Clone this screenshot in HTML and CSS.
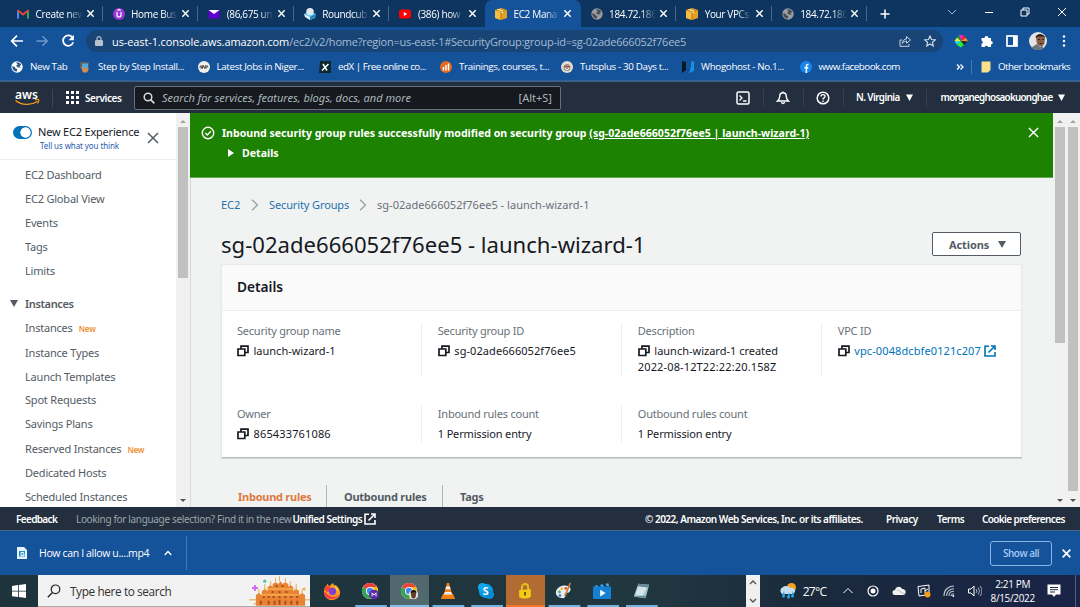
FILE: index.html
```html
<!DOCTYPE html>
<html lang="en">
<head>
<meta charset="utf-8">
<title>EC2 Management Console</title>
<link rel="stylesheet" href="styles.css">
</head>
<body>
<svg class="defs" width="0" height="0">
  <symbol id="x" viewBox="0 0 10 10"><path d="M1.500 1.500l7 7M8.500 1.500l-7 7" stroke="currentColor" fill="none" stroke-width="1.600"/></symbol>
  <symbol id="xthin" viewBox="0 0 12 12"><path d="M1 1l10 10M11 1L1 11" stroke="currentColor" fill="none" stroke-width="1.500"/></symbol>
  <symbol id="cube" viewBox="0 0 12 12"><path d="M0 2l6-2 6 2v8l-6 2-6-2z" fill="#e3a024"/><path d="M0 2l6 1.500V12L0 10z" fill="#f3bd3e"/><path d="M3 1l5 1.500v3l-1.500-.6-1 .4V3L2 1.800z" fill="#fff0b0"/><path d="M6 3.500V12" stroke="#9b6a10" stroke-width=".8"/><path d="M0 2l6 1.500L12 2" fill="none" stroke="#a97610" stroke-width=".6"/></symbol>
  <symbol id="globe" viewBox="0 0 12 12"><circle cx="6" cy="6" r="5.700" fill="currentColor"/><path d="M1.300 5l2.500 1 .8 1.500 1.700.5-.5 2.600C3 10.500 1 8 1.300 5zM5 1.300l3 .3 2.300 2L8.500 5.500l1 1L11 7l-1.500-.3L6.500 6.300 5 4.800l1.700-1z" fill="var(--land)"/></symbol>
  <symbol id="copy" viewBox="0 0 12 12"><path d="M1 4h6.800v6.500H1zM4 4V1.200h7v6.300H8" fill="none" stroke="#16191f" stroke-width="1.700"/></symbol>
  <symbol id="ext" viewBox="0 0 12 12"><path d="M5 1.200H1v9.800h10V7M7 1h4v4M11 1L4.500 7.500" fill="none" stroke="currentColor" stroke-width="1.600"/></symbol>
  <symbol id="chev" viewBox="0 0 8 12"><path d="M1 .8L6.500 6 1 11.200" fill="none" stroke="#9aa5a5" stroke-width="1.400"/></symbol>
  <symbol id="chrome" viewBox="0 0 20 20"><circle cx="10" cy="10" r="9" fill="#fff"/><path d="M10 10V1l7.800 4.500A9 9 0 0 1 10 19z" fill="#f9bc15"/><path d="M2.200 5.500A9 9 0 0 0 10 19l3.500-6L10 10z" fill="#34a353"/><path d="M2.200 5.500A9 9 0 0 1 17.800 5.500H10v4.500z" fill="#e94335"/><circle cx="10" cy="10" r="4.500" fill="#fff"/><circle cx="10" cy="10" r="3.500" fill="#4285f4"/></symbol>
</svg>

<header class="browser">
  <div class="tabs">
    <div class="tab"><svg class="fav" viewBox="0 0 12 12"><path d="M1 10.500V2.500" stroke="#4b8af5" stroke-width="2"/><path d="M11 10.500V2.500" stroke="#35a853" stroke-width="2"/><path d="M.5 2.200L6 6.500l5.500-4.300" fill="none" stroke="#ea4335" stroke-width="2"/></svg><span class="tt">Create new</span><svg class="tx"><use href="#x"/></svg></div>
    <div class="tab"><svg class="fav" viewBox="0 0 12 12"><circle cx="6" cy="6" r="6" fill="#9a35d8"/><path d="M4 4v3a2 2 0 0 0 4 0V4M4.300 2.500L6 1.500l1.700 1" fill="none" stroke="#fff" stroke-width="1.200"/></svg><span class="tt">Home Busi</span><svg class="tx"><use href="#x"/></svg></div>
    <div class="tab"><svg class="fav" viewBox="0 0 12 12"><path d="M.5 2h11v8.500H.5z" fill="#6001d2"/><path d="M.5 2h11L6 6z" fill="#fff"/></svg><span class="tt">(86,675 un</span><svg class="tx"><use href="#x"/></svg></div>
    <div class="tab"><svg class="fav" viewBox="0 0 12 12"><path d="M0 6l6-3 6 3-1 4-5 2-4-3z" fill="#37beff"/><path d="M0 6l6 3v3l-5-3z" fill="#e8eef2"/><circle cx="6" cy="3.800" r="3.800" fill="#dfe7ec"/><path d="M6 9l6-3v2l-5 4H6z" fill="#2b82b3"/></svg><span class="tt">Roundcub</span><svg class="tx"><use href="#x"/></svg></div>
    <div class="tab nosep"><svg class="fav" viewBox="0 0 12 12"><rect y="1.500" width="12" height="9" rx="2.500" fill="#f00"/><path d="M4.800 4l3.500 2-3.500 2z" fill="#fff"/></svg><span class="tt">(386) how</span><svg class="tx"><use href="#x"/></svg></div>
    <div class="tab active"><svg class="fav"><use href="#cube"/></svg><span class="tt">EC2 Mana</span><svg class="tx"><use href="#x"/></svg></div>
    <div class="tab"><svg class="fav grey"><use href="#globe"/></svg><span class="tt">184.72.186</span><svg class="tx"><use href="#x"/></svg></div>
    <div class="tab"><svg class="fav"><use href="#cube"/></svg><span class="tt">Your VPCs</span><svg class="tx"><use href="#x"/></svg></div>
    <div class="tab"><svg class="fav grey"><use href="#globe"/></svg><span class="tt">184.72.186</span><svg class="tx"><use href="#x"/></svg></div>
    <svg class="plus" viewBox="0 0 10 10"><path d="M5 .5v9M.5 5h9" stroke="#fff" stroke-width="1.500"/></svg>
    <div class="wincontrols">
      <svg viewBox="0 0 12 12"><path d="M2 4l4 4 4-4" fill="none" stroke="#9db6d3"/></svg>
      <svg viewBox="0 0 12 12"><path d="M2 6.500h8" stroke="#fff"/></svg>
      <svg viewBox="0 0 12 12"><path d="M2 4h6v6H2zM4 4V2h6v6H8" fill="none" stroke="#fff"/></svg>
      <svg viewBox="0 0 12 12"><path d="M2 2l8 8M10 2l-8 8" fill="none" stroke="#fff"/></svg>
    </div>
  </div>
  <div class="toolbar">
    <svg class="i14" viewBox="0 0 14 14"><path d="M13 7H2M7 1.700L1.700 7 7 12.300" fill="none" stroke="#fff" stroke-width="1.700"/></svg>
    <svg class="i14 fwd" viewBox="0 0 14 14"><path d="M1.500 7h10M7.500 2.300L12.200 7l-4.700 4.700" fill="none" stroke="#6d98c8" stroke-width="1.500"/></svg>
    <svg class="i14 rel" viewBox="0 0 14 14"><path d="M11.800 4A5.200 5.200 0 1 0 12.200 8.300" fill="none" stroke="#fff" stroke-width="1.800"/><path d="M12.900.8v5.400H7.500z" fill="#fff"/></svg>
    <div class="omni">
      <svg class="lock" viewBox="0 0 8 10"><rect y="4" width="8" height="6" rx="1" fill="#b7c2cf"/><path d="M2 4.500V2.700a2 2 0 0 1 4 0v1.800" fill="none" stroke="#b7c2cf" stroke-width="1.200"/></svg>
      <span class="url"><b>us-east-1.console.aws.amazon.com</b>/ec2/v2/home?region=us-east-1#SecurityGroup:group-id=sg-02ade666052f76ee5</span>
      <svg class="i12" viewBox="0 0 12 12"><path d="M3 5H1v6.300h9V9M3.200 8.500C3.500 5.500 5.200 4 7.500 4V1.500L11.500 5 7.500 8.300V6C5.800 6 4.300 6.800 3.200 8.500z" fill="none" stroke="#c5d2e2"/></svg>
      <svg class="i12 star" viewBox="0 0 12 12"><path d="M6 1l1.500 3.500 3.800.3-2.900 2.500.9 3.700L6 9l-3.300 2 .9-3.700L.7 4.800l3.800-.3z" fill="none" stroke="#d5e0ec" stroke-width="1.100"/></svg>
    </div>
    <div class="exts">
      <svg viewBox="0 0 14 14"><path d="M7 7L5 1h4z" fill="#e728d8"/><path d="M7 7l2-6 3 3z" fill="#f22"/><path d="M7 7l5-3 2 3.500z" fill="#f92"/><path d="M7 7l6.500.5L10 11z" fill="#222"/><path d="M7 7l3 4-3 2.500z" fill="#2d3"/><path d="M7 7v6.500L3 11z" fill="#3e3"/><path d="M7 7l-4 4-2.500-4z" fill="#2dd"/><path d="M7 7H.5L3 3.500z" fill="#ee3"/><path d="M7 7L3 3.500 5 1z" fill="#1c9d3c"/></svg>
      <svg viewBox="0 0 14 14"><path d="M1.500 4H4.500a2 2 0 1 1 4 0H11v3a1.800 1.800 0 1 1 0 3.600V13H8a1.700 1.700 0 0 0-3.300 0H1.500V9.800a1.700 1.700 0 0 0 0-3.300z" fill="#fff"/></svg>
      <svg viewBox="0 0 14 14"><rect x="2" y="2" width="10" height="10" fill="none" stroke="#fff" stroke-width="1.700"/><path d="M8 2h4v10H8z" fill="#fff"/></svg>
      <svg class="av" viewBox="0 0 18 18"><circle cx="9" cy="9" r="9" fill="#e3e4e6"/><path d="M7 6c0-5 8-5 9 0l-.6 5.500c-1.500 4-5.500 4-7.500 0z" fill="#8a5f45"/><path d="M6.500 6C6.500 1 15 1 16.300 6L14.500 4.500h-6z" fill="#241b18"/><path d="M2.500 15.500L8 12l3 3 2-1 1.500 1.500c-3 3.500-8.500 3.500-12 0z" fill="#6b747e"/><path d="M9 7.500h2M13 7.500h2M10.500 11.500h3" stroke="#3a241a"/></svg>
      <svg viewBox="0 0 14 14" fill="#fff"><circle cx="7" cy="2.500" r="1.200"/><circle cx="7" cy="7" r="1.200"/><circle cx="7" cy="11.500" r="1.200"/></svg>
    </div>
  </div>
  <div class="bookmarks">
    <div class="bm" style="width:68px"><svg class="white"><use href="#globe"/></svg><span>New Tab</span></div>
    <div class="bm" style="width:118.500px"><svg viewBox="0 0 12 12"><path d="M1 1h9v6H1z" fill="#5a5f5d"/><path d="M3 2.500h6v5H3z" fill="#4fa9d9"/><path d="M2 6l4 1 4 .5-2 4H4z" fill="#d88c45"/></svg><span>Step by Step Install...</span></div>
    <div class="bm" style="width:121.500px"><svg viewBox="0 0 12 12"><circle cx="6" cy="6" r="6" fill="#f2f0ea"/><path d="M1.500 6.500l1.500-2v3l1.500-3v3l1-3 1 3 1-3 .5 3 1-3 1 2" fill="none" stroke="#555"/></svg><span>Latest Jobs in Niger...</span></div>
    <div class="bm tight" style="width:121px"><svg viewBox="0 0 12 12"><path d="M1 0h11v12H0z" fill="#0c2932"/><path d="M4 3l4 6.500M9.500 3L3 9.500" stroke="#fff" stroke-width="1.500"/></svg><span>edX | Free online co...</span></div>
    <div class="bm" style="width:121px"><svg viewBox="0 0 12 12"><circle cx="6" cy="6" r="6" fill="#e76a20"/><path d="M3.500 6v3.500M6 4v5.500M8.500 2.500v7" stroke="#fff" stroke-width="1.500"/></svg><span>Trainings, courses, t...</span></div>
    <div class="bm" style="width:121px"><svg viewBox="0 0 12 12"><circle cx="6" cy="6" r="6" fill="#e2ddd1"/><circle cx="6" cy="6.500" r="3.500" fill="#9b938d"/><path d="M3 5.500h6" stroke="#c74732"/><path d="M4 7l2 2 2-2" stroke="#fff" fill="none"/></svg><span>Tutsplus - 30 Days t...</span></div>
    <div class="bm" style="width:117px"><svg viewBox="0 0 12 12"><path d="M0 0l4 1v8l-4 3z" fill="#07182a"/><path d="M12 0v10l-5 2V8l2-1V1z" fill="#1490e5"/><path d="M4 7l4 1v3z" fill="#084b86"/></svg><span>Whogohost - No.1...</span></div>
    <div class="bm fb tight"><svg viewBox="0 0 12 12"><circle cx="6" cy="6" r="6" fill="#1787ee"/><path d="M6.400 12V5.200C6.400 3.700 7 3.400 8.500 3.500M4.500 6.800h3.800" fill="none" stroke="#fff" stroke-width="1.500"/></svg><span>www.facebook.com</span></div>
    <svg class="more" viewBox="0 0 8 8"><path d="M1 1.500L3.500 4 1 6.500M4.500 1.500L7 4 4.500 6.500" fill="none" stroke="#fff" stroke-width="1.300"/></svg>
    <i></i>
    <svg class="folder" viewBox="0 0 10 12"><path d="M.5.500h9V9L7 11.500H.5z" fill="#fbe08a"/></svg>
    <span class="other">Other bookmarks</span>
  </div>
</header>

<nav class="aws">
  <svg class="smile" viewBox="0 0 26 16"><text class="logo" x="0" y="8.500" textLength="23">aws</text><path d="M.5 10.500c6.500 5 15.500 5 22 1" fill="none" stroke="#f79a1e" stroke-width="1.400"/><path d="M20 9.800c3-.6 4.300-.4 3.800 1-.3 1-.8 2-1.300 2.700" fill="none" stroke="#f79a1e" stroke-width="1.200"/></svg>
  <i class="vs"></i>
  <svg class="grid" viewBox="0 0 13 13" fill="#fff"><path d="M0 0h3v3H0zM5 0h3v3H5zM10 0h3v3h-3zM0 5h3v3H0zM5 5h3v3H5zM10 5h3v3h-3zM0 10h3v3H0zM5 10h3v3H5zM10 10h3v3h-3z"/></svg>
  <b class="services">Services</b>
  <div class="search"><svg viewBox="0 0 12 12"><circle cx="5" cy="5" r="3.800" fill="none" stroke="#d5dbdb" stroke-width="1.500"/><path d="M7.700 7.700l3.600 3.600" stroke="#d5dbdb" stroke-width="1.700"/></svg><em>Search for services, features, blogs, docs, and more</em><span>[Alt+S]</span></div>
  <div class="cell c1"><svg viewBox="0 0 14 14"><rect x="1" y="1" width="12" height="12" rx="1.500" fill="none" stroke="#fff" stroke-width="1.500"/><path d="M3.500 4.500L6 7 3.500 9.500M7 10h3.500" fill="none" stroke="#fff" stroke-width="1.300"/></svg></div>
  <div class="cell"><svg viewBox="0 0 14 14"><path d="M1.500 10c2-1.500 2-3 2.300-5a3.200 3.200 0 0 1 6.400 0c.3 2 .3 3.500 2.300 5zM5.500 11c.2 2 2.800 2 3 0M7 .5V2" fill="none" stroke="#fff" stroke-width="1.400"/></svg></div>
  <div class="cell"><svg viewBox="0 0 14 14"><circle cx="7" cy="7" r="5.800" fill="none" stroke="#fff" stroke-width="1.500"/><path d="M5 5.500C5 3 9 3 9 5.400 9 7 7 6.800 7 8.500M7 9.600V11" fill="none" stroke="#fff" stroke-width="1.400"/></svg></div>
  <div class="cell region"><b>N. Virginia</b><svg class="tri" viewBox="0 0 6 6"><path d="M0 .5h6l-3 5.500z" fill="#fff"/></svg></div>
  <div class="user"><b>morganeghosaokuonghae</b><svg class="tri" viewBox="0 0 6 6"><path d="M0 .5h6l-3 5.500z" fill="#fff"/></svg></div>
</nav>

<main class="page">
  <aside class="side">
    <div class="sidehead">
      <span class="toggle"></span>
      <div class="exp"><div>New EC2 Experience</div><a>Tell us what you think</a></div>
      <svg class="sx"><use href="#xthin"/></svg>
    </div>
    <ul>
      <li>EC2 Dashboard</li><li>EC2 Global View</li><li>Events</li><li>Tags</li><li>Limits</li>
      <li class="group"><svg viewBox="0 0 8 7"><path d="M0 0h8L4 7z" fill="#545b64"/></svg><b>Instances</b></li>
      <li class="n">Instances<b>New</b></li><li>Instance Types</li><li>Launch Templates</li><li>Spot Requests</li><li>Savings Plans</li>
      <li class="n">Reserved Instances<b>New</b></li><li>Dedicated Hosts</li><li>Scheduled Instances</li>
    </ul>
  </aside>
  <div class="sb sb1"><svg viewBox="0 0 6 3"><path d="M0 3l3-3 3 3z" fill="#a3a3a3"/></svg><i></i><svg class="dn" viewBox="0 0 6 3"><path d="M0 0l3 3 3-3z" fill="#505050"/></svg></div>
  <section class="content">
    <div class="flash">
      <svg class="ok" viewBox="0 0 14 14"><circle cx="7" cy="7" r="5.700" fill="none" stroke="#fff" stroke-width="1.400"/><path d="M4.300 7l2 2 3.500-3.700" fill="none" stroke="#fff" stroke-width="1.400"/></svg>
      <div class="msg"><b>Inbound security group rules successfully modified on security group <u>(sg-02ade666052f76ee5 | launch-wizard-1)</u></b>
        <div class="det"><svg viewBox="0 0 6 8"><path d="M0 0l6 4-6 4z" fill="#fff"/></svg><b>Details</b></div></div>
      <svg class="fx"><use href="#xthin"/></svg>
    </div>
    <div class="crumbs"><a class="ec2">EC2</a><svg><use href="#chev"/></svg><a class="sgs">Security Groups</a><svg><use href="#chev"/></svg><span>sg-02ade666052f76ee5 - launch-wizard-1</span></div>
    <div class="titlerow"><h1>sg-02ade666052f76ee5 - launch-wizard-1</h1><div class="btn">Actions<svg viewBox="0 0 8 7"><path d="M0 0h8L4 7z" fill="#545b64"/></svg></div></div>
    <div class="card">
      <h2>Details</h2>
      <div class="cols r1">
        <div><label>Security group name</label><p><svg><use href="#copy"/></svg>launch-wizard-1</p></div>
        <div><label>Security group ID</label><p class="sgid"><svg><use href="#copy"/></svg>sg-02ade666052f76ee5</p></div>
        <div><label>Description</label><p><svg><use href="#copy"/></svg>launch-wizard-1 created<br><span class="date">2022-08-12T22:22:20.158Z</span></p></div>
        <div><label>VPC ID</label><p class="vpc"><svg><use href="#copy"/></svg><a>vpc-0048dcbfe0121c207</a><svg class="e"><use href="#ext"/></svg></p></div>
      </div>
      <div class="cols r2">
        <div><label>Owner</label><p class="own"><svg><use href="#copy"/></svg>865433761086</p></div>
        <div><label>Inbound rules count</label><p class="perm">1 Permission entry</p></div>
        <div><label>Outbound rules count</label><p class="perm">1 Permission entry</p></div>
      </div>
    </div>
    <div class="subtabs"><b class="on">Inbound rules</b><b>Outbound rules</b><b>Tags</b></div>
  </section>
  <div class="sb sb2"><svg viewBox="0 0 6 3"><path d="M0 3l3-3 3 3z" fill="#a3a3a3"/></svg><i></i><svg class="dn" viewBox="0 0 6 3"><path d="M0 0l3 3 3-3z" fill="#505050"/></svg></div>
  <div class="sb sb3"><svg viewBox="0 0 6 3"><path d="M0 3l3-3 3 3z" fill="#a3a3a3"/></svg><i></i><svg class="dn" viewBox="0 0 6 3"><path d="M0 0l3 3 3-3z" fill="#505050"/></svg></div>
</main>

<footer class="foot">
  <b class="fb1">Feedback</b><span class="lang">Looking for language selection? Find it in the new</span><b class="uni">Unified Settings</b><svg><use href="#ext"/></svg>
  <b class="copyr">© 2022, Amazon Web Services, Inc. or its affiliates.</b><b class="priv">Privacy</b><b class="terms">Terms</b><b class="cookie">Cookie preferences</b>
</footer>

<div class="dl">
  <svg class="file" viewBox="0 0 10 12"><path d="M0 0h7l3 3v9H0z" fill="#e8f3fa"/><path d="M2 4h6v5.500H2z" fill="#1d94cf"/><path d="M7 5.500H4v3h3V7H5.500" stroke="#fff" fill="none" stroke-width=".9"/></svg>
  <span>How can I allow u....mp4</span>
  <svg class="up" viewBox="0 0 8 6"><path d="M.7 5L4 1.500 7.300 5" fill="none" stroke="#fff" stroke-width="1.300"/></svg>
  <i></i>
  <div class="showall">Show all</div>
  <svg class="dx"><use href="#x"/></svg>
</div>

<div class="task">
  <div class="start"><svg viewBox="0 0 14 14" fill="#fff"><path d="M0 2l6-.9v5.600H0zM6.800 1L14 0v6.700H6.800zM0 7.500h6v5.600L0 12.200zM6.800 7.500H14V14l-7.200-1z"/></svg></div>
  <div class="tsearch"><svg class="mag" viewBox="0 0 14 14"><circle cx="8.500" cy="5.300" r="4.300" fill="none" stroke="#222" stroke-width="1.200"/><path d="M5.500 8.500L.8 13.200" stroke="#222" stroke-width="1.300"/></svg><span>Type here to search</span>
    <svg class="palace" viewBox="0 0 62 30"><path d="M0 24h62M5 28h52" stroke="#e8a23c"/><path d="M7 30V19l3-2 3 2v-4l3-2 3 2v-4l3-2 2 2V8l3-2 3 2 1-2 1-1 1 1 1 2 3-2 3 2v3l2-2 3 2v4l3-2 3 2v4l3-2 3 2v11z" fill="#ea8433"/><path d="M16 13V8M22 9V5M27 6V2M31 5V0M37 6V2M42 9V5M48 13V8M10 17v-4M54 17v-4" stroke="#e4ad48"/><path d="M12 19h38M17 13h31" stroke="#f9c265"/><path d="M15 22v-2M20 22v-2M25 22v-2M31 22v-2M37 22v-2M43 22v-2M49 22v-2M24 17v-2M31 17v-2M38 17v-2M20 29v-4M26 29v-4M31 29v-5M37 29v-4M43 29v-4M12 29v-4M49 29v-4M28 11V9M34 11V9" stroke="#a64b23" stroke-width="2"/><path d="M3 12h6M6 9v6" stroke="#ce6bea" stroke-width="2"/><circle cx="16" cy="5" r="1.600" fill="#4bc497"/><circle cx="56" cy="13" r="1.600" fill="#f1b33c"/></svg>
  </div>
  <div class="app ff"><svg viewBox="0 0 20 20"><path d="M2 6l2-2 1-2 2 3c1-2 3-3 4-4l2 4 1-2c3 3 5 5 5 9 0 5-4 8-9 8S1 16 1 11z" fill="#ff9a1f"/><path d="M2 6c0 3 1 5 3 5l3-1 2-3-3-2-3-1z" fill="#ff4436"/><path d="M1 11c0 5 4 8 9 8 4 0 7-2 8-5-3 3-6 3-9 2-4-1-5-5-8-5z" fill="#f83a50"/><circle cx="10.500" cy="10.500" r="4" fill="#7e40d9"/><path d="M12 3c3 2 5 4 5 8l-3-4z" fill="#ffd83d"/></svg></div>
  <div class="app run"><svg viewBox="0 0 20 20"><use href="#chrome"/><circle cx="14.500" cy="14" r="5.500" fill="#5b2aa6"/><path d="M12.300 16v-4l2.200 2.500 2.200-2.500v4" fill="none" stroke="#fff"/></svg></div>
  <div class="app cur"><svg viewBox="0 0 20 20"><use href="#chrome"/><circle cx="15" cy="14" r="5.300" fill="#e2ded9"/><path d="M12 12c1-4 6-4 6 0l-.5 4c-1 3-4 3-5 0z" fill="#60402d"/><path d="M11.800 12c0-4 6.500-4 6.500 0l-2-1z" fill="#17110e"/></svg></div>
  <div class="app run"><svg viewBox="0 0 20 20"><path d="M3 16l1.500-3h11l1.500 3 1 3H2z" fill="#ee7b14"/><path d="M8.800 1h2.400L15 16H5z" fill="#f28420"/><path d="M7.900 5h4.200l.8 3H7.100zM6.300 11h7.400l.8 3h-9z" fill="#eee"/></svg></div>
  <div class="app run"><svg viewBox="0 0 20 20"><circle cx="10" cy="10" r="8" fill="#0a9ae5"/><circle cx="6" cy="6" r="5" fill="#10a5ee"/><circle cx="14" cy="14" r="5" fill="#0789d6"/><text class="skype" x="6.500" y="14.500">S</text></svg></div>
  <div class="app orange"><svg viewBox="0 0 20 20"><path d="M6.500 10V6c0-5 7-5 7 0v4" fill="none" stroke="#e3c21c" stroke-width="2.200"/><path d="M3.500 9l13-1v8c-3 3-9 3-13 1z" fill="#f2cb16"/><path d="M10 11v4" stroke="#6c4c0b" stroke-width="2"/></svg></div>
  <div class="app run"><svg viewBox="0 0 20 20"><path d="M1 12C1 7 6 4 11 4c6 0 8 4 5 7-2 2-4 0-5 2s2 4-2 5c-4 0-8-2-8-6z" fill="#e6edf1"/><circle cx="5" cy="11" r="1.500" fill="#3db059"/><circle cx="7.500" cy="7.500" r="1.500" fill="#f3b720"/><circle cx="12" cy="7" r="1.500" fill="#e34b35"/><circle cx="5.500" cy="15" r="1.500" fill="#386ed1"/><path d="M11 16L17 1" stroke="#cc7b36" stroke-width="1.800"/></svg></div>
  <div class="app run"><svg viewBox="0 0 20 20"><path d="M1 4l17-3v5H1z" fill="#173752"/><path d="M2 4l3-.5L6 6H3zM8 3l3-.5 1 3H9zM14 2l3-.5 1 3h-3z" fill="#46ade6"/><rect x="0" y="5" width="20" height="14" rx="1" fill="#1681d2"/><path d="M8 8.500v7.500l6-3.700z" fill="#fff"/></svg></div>
  <div class="app run"><svg viewBox="0 0 20 20"><path d="M7 2l12 1-4 15-13-2z" fill="#a8cbd2"/><path d="M7 2l12 1-1 3-12-1z" fill="#688a98"/><path d="M7 5l9 1-4 9-8-1z" fill="#d6e6e7"/><path d="M2 16l13 2 1-3z" fill="#6b9398"/></svg></div>
  <div class="spin"><svg viewBox="0 0 8 5"><path d="M1 4l3-3 3 3" fill="none" stroke="#555" stroke-width="1.400"/></svg><svg viewBox="0 0 8 5"><path d="M1 1l3 3 3-3" fill="none" stroke="#555" stroke-width="1.400"/></svg></div>
  <div class="weather"><svg viewBox="0 0 18 18"><circle cx="12.500" cy="5.500" r="4.500" fill="#f7a521"/><path d="M3 12a4 4 0 0 1 1-7c2-2 6-1 7 1 5-1 7 4 3 6z" fill="#c5dff2"/><path d="M5 9l-2 5c0 2 3 2 3 0zM10 10l-2 5c0 2 3 2 3 0zM14 9l-2 5c0 2 3 2 3 0z" fill="#27a5e6"/></svg><span>27°C</span></div>
  <svg class="tr" viewBox="0 0 14 14"><path d="M2.500 9L7 4.500 11.500 9" fill="none" stroke="#fff"/></svg>
  <svg class="tr" viewBox="0 0 14 14"><circle cx="7" cy="7" r="5" fill="none" stroke="#fff" stroke-width="1.200"/><circle cx="7" cy="7" r="2.500" fill="#fff"/></svg>
  <svg class="tr" viewBox="0 0 14 14"><path d="M3 11a2.500 2.500 0 0 1 0-5c1-4 6-4 7-1 3 0 4 2 3.500 4s-2 2-3 2z" fill="#f0f0f0"/><path d="M5 6c2 0 4 3 8 4" stroke="#bbb" fill="none"/></svg>
  <svg class="tr" viewBox="0 0 14 14"><path d="M1 2.500L12 1v9.500L2 12z" fill="none" stroke="#fff"/><path d="M4 9V5l4-1v5M8 7l3-2" fill="none" stroke="#fff"/><circle cx="10.500" cy="10.500" r="3" fill="#f59b1d"/></svg>
  <svg class="tr" viewBox="0 0 14 14"><path d="M2 12C2 6 6 2 12 2M4.500 12c0-4 3-7.300 7.500-7.300M7 12c0-3 2-4.700 5-4.700M9 12c.3-1.500 1.500-2.300 3-2.300" fill="none" stroke="#b8bfca" stroke-width="1.100"/><circle cx="11.300" cy="12" r="1" fill="#fff"/></svg>
  <svg class="tr snd" viewBox="0 0 14 14"><path d="M.5 5H3l3-3v10L3 9H.5z" fill="none" stroke="#fff"/><path d="M8 5c1 1.500 1 2.500 0 4M10 3.500c1.800 2.500 1.800 4.500 0 7M12 2c2.500 3.500 2.500 6.500 0 10" fill="none" stroke="#a9b2bf"/></svg>
  <div class="clock"><div>2:21 PM</div><div>8/15/2022</div></div>
  <svg class="note" viewBox="0 0 14 14"><path d="M.5.500h13v10H9L7 13l-2-2.500H.5z" fill="#fff"/><path d="M3 3.500h8M3 5.700h8M3 8h5" stroke="#1b2840"/></svg>
  <i class="desk"></i>
</div>
</body>
</html>
```
FILE: styles.css
```css
* { box-sizing: border-box; }
body { margin: 0; width: 1080px; height: 607px; overflow: hidden; font-family: "Noto Sans", "Open Sans", sans-serif; font-size: 11px; color: #16191f; display: flex; flex-direction: column; }
svg { flex: none; display: block; }
span, b, a, em { white-space: nowrap; }
.defs { position: absolute; }

/* browser chrome */
.browser { height: 82px; background: #14529a; border-bottom: 2px solid #35608f; color: #fff; font-family: "Open Sans", sans-serif; font-size: 10px; }
.tabs { height: 27px; background: #0d355f; display: flex; align-items: center; padding-left: 7px; }
.tab { width: 95.600px; height: 27px; display: flex; align-items: center; padding-left: 10px; background: linear-gradient(#45688f, #45688f) right center / 1px 15px no-repeat; }
.tab.nosep { background: none; }
.tab.active { background: #14529a; border-radius: 7px 7px 0 0; }
.fav { width: 12px; height: 12px; }
.grey { color: #9b9da0; --land: #454d56; }
.tt { width: 47px; margin-left: 6.500px; letter-spacing: -.35px; -webkit-mask-image: linear-gradient(90deg, #000 68%, transparent 100%); mask-image: linear-gradient(90deg, #000 68%, transparent 100%); }
.tx { width: 9px; height: 9px; margin-left: 3px; }
.plus { width: 10px; height: 10px; margin-left: 12.500px; }
.wincontrols { display: flex; gap: 24.400px; margin-left: 56.500px; margin-top: -4px; }
.wincontrols svg { width: 12px; height: 12px; }
.toolbar { height: 28px; display: flex; align-items: center; padding-left: 10px; }
.i14 { width: 14px; height: 14px; }
.fwd { margin-left: 11px; }
.rel { margin-left: 12px; }
.omni { width: 857px; height: 22px; margin-left: 11px; background: #184575; border-radius: 11px; display: flex; align-items: center; padding-left: 9px; }
.lock { width: 8px; height: 10px; }
.url { width: 787px; margin-left: 9px; font-size: 11px; letter-spacing: -.24px; color: #a4bbd5; }
.url b { color: #fff; font-weight: 400; letter-spacing: -.11px; }
.i12 { width: 12px; height: 12px; }
.star { margin-left: 13px; }
.exts { display: flex; align-items: center; gap: 11.500px; margin-left: 11px; }
.exts svg { width: 14px; height: 14px; }
.exts .av { width: 18px; height: 18px; margin: 0 -1.500px; }
.bookmarks { height: 23px; display: flex; align-items: center; padding-left: 11px; font-size: 9.800px; }
.bm { display: flex; align-items: center; letter-spacing: -.35px; }
.tight { letter-spacing: -.5px; }
.bm svg { width: 12px; height: 12px; margin-right: 7px; }
.white { color: #fff; --land: #315988; }
.fb { width: 156px; margin-left: .5px; }
.more { width: 8px; height: 8px; }
.bookmarks i { width: 1px; height: 14px; background: #4179b3; margin-left: 7px; }
.folder { width: 10px; height: 12px; margin-left: 9px; }
.other { margin-left: 7.500px; letter-spacing: -.55px; }

/* console navigation */
.aws { height: 31px; background: #232f3e; color: #fff; display: flex; align-items: center; padding-left: 15px; font-size: 10px; }
.smile { width: 26px; height: 16px; }
.logo { font: 600 12px "Noto Sans", sans-serif; fill: #fff; }
.vs { width: 1px; height: 18px; background: #3c4654; margin-left: 11px; }
.grid { width: 13px; height: 13px; margin-left: 13px; }
.services { width: 49px; margin-left: 6px; font-weight: 600; letter-spacing: -.4px; }
.search { width: 427px; height: 24px; border: 1px solid #687078; border-radius: 2px; background: #16191f; display: flex; align-items: center; padding: 0 8px 0 8px; color: #aab7b8; font-size: 11px; }
.search svg { width: 12px; height: 12px; }
.search em { flex: 1; margin-left: 7px; }
.cell { width: 40px; height: 18px; display: flex; align-items: center; justify-content: center; border-right: 1px solid #36414f; }
.cell svg { width: 14px; height: 14px; }
.c1 { margin-left: 162.500px; }
.region { width: 83px; }
.region b { width: 50px; font-size: 9.800px; letter-spacing: -.55px; font-weight: 600; }
.region .tri, .tri { width: 7px; height: 7px; }
.user { display: flex; align-items: center; margin-left: 14px; }
.user b { width: 117px; font-size: 9.800px; font-weight: 600; letter-spacing: -.7px; }

/* page body */
.page { height: 394px; display: flex; background: #f1f3f3; overflow: hidden; }
.side { width: 176px; background: #fff; color: #545b64; }
.sidehead { height: 47px; display: flex; border-bottom: 1px solid #eaeded; }
.toggle { width: 19px; height: 13px; margin: 13px 0 0 13px; border-radius: 7px; background: radial-gradient(circle at 12.500px 6.500px, #fff 4.800px, #0073bb 5.500px); }
.exp { width: 109px; margin: 11px 0 0 6px; line-height: 16px; color: #16191f; letter-spacing: -.2px; }
.exp div { white-space: nowrap; }
.exp a { display: block; color: #2a5db0; font-size: 8px; line-height: 12px; margin-left: 2px; letter-spacing: -.1px; }
.sx { width: 12px; height: 12px; margin-top: 19px; color: #545b64; }
.side ul { list-style: none; margin: 0; padding: 3px 0 0; }
.side li { height: 23.800px; padding-left: 25px; display: flex; align-items: center; letter-spacing: -.2px; }
.side li.group { height: 24px; margin-top: 9.500px; padding-left: 10px; }
.group svg { width: 8px; height: 7px; margin-right: 7px; }
.group b { font-weight: 600; letter-spacing: -.35px; }
.side li.n { height: 25px; }
.n b { color: #ec9030; font-size: 8px; margin: 2px 0 0 6px; font-weight: 600; }
.sb { width: 13px; background: #f1f1f1; display: flex; flex-direction: column; align-items: center; padding-top: 7px; }
.sb svg { width: 6px; height: 3px; }
.sb i { width: 10px; background: #c1c1c1; margin-top: 4px; height: 151px; }
.sb .dn { margin-top: auto; margin-bottom: 5px; }
.sb1 { width: 14px; padding-right: 1px; }
.sb2 i { height: 216px; }
.sb3 { width: 14px; }
.sb3 i { height: 364px; }
.content { width: 863px; border-left: 1px solid #d5dbdb; }
.flash { height: 65px; background: #1d8102; color: #fff; display: flex; margin-left: -1px; padding: 13px 14px 0 11px; border-bottom: 1px solid #65a653; }
.ok { width: 14px; height: 14px; }
.msg { width: 806px; margin-left: 7px; line-height: 14px; font-size: 10.600px; letter-spacing: -.01px; }
.msg b { font-weight: 700; }
.det { display: flex; align-items: center; padding: 6px 0 0 6px; }
.det svg { width: 6px; height: 8px; margin-right: 8px; }
.fx { width: 11px; height: 11px; margin-top: 1px; }
.crumbs { height: 53px; padding-left: 30px; display: flex; align-items: center; color: #687078; }
.crumbs svg { width: 8px; height: 12px; }
.crumbs a { color: #2372ad; }
.crumbs .ec2 { width: 30px; }
.crumbs .sgs { width: 90px; margin-left: 10px; letter-spacing: -.12px; }
.crumbs span { margin-left: 10px; letter-spacing: .03px; }
.titlerow { height: 24px; margin-top: 1px; padding-left: 30px; display: flex; align-items: center; }
h1 { width: 711px; margin: 0; font-size: 22.100px; font-weight: 400; line-height: 24px; }
.btn { width: 89px; height: 24px; border: 1px solid #545b64; border-radius: 2px; background: #fff; color: #545b64; font-weight: 700; display: flex; align-items: center; justify-content: space-between; padding: 0 14px 0 16px; letter-spacing: -.1px; }
.btn svg { width: 8px; height: 7px; }
.card { width: 801px; height: 194px; margin: 8px 0 0 30px; background: #fff; border: 1px solid #e6eaea; border-bottom-color: #b5baba; box-shadow: 0 1px 1px #d5dbdb; }
h2 { height: 46px; margin: 0; padding-left: 15px; background: #fafafa; border-bottom: 1px solid #eaeded; font-size: 13.700px; font-weight: 600; line-height: 44px; }
.cols { display: grid; grid-template-columns: 199px 200px 200px 1fr; margin-top: 12px; }
.cols > div { padding-left: 15.800px; height: 53px; border-left: 1px solid #eaeded; }
.cols > div:first-child { border: 0; padding-left: 15px; }
.r2 { margin-top: 30px; }
.r2 > div { height: 36px; }
.cols label { display: block; color: #687078; line-height: 16px; letter-spacing: -.22px; }
.cols p { margin: 4px 0 0; line-height: 16px; white-space: nowrap; }
.cols svg { display: inline-block; width: 12px; height: 12px; vertical-align: -2px; margin-right: 4.500px; }
.sgid { letter-spacing: .07px; }
.date { letter-spacing: .14px; }
.own { letter-spacing: .15px; }
.perm { letter-spacing: -.16px; }
.vpc a { color: #0073bb; letter-spacing: .1px; }
.cols .e { color: #0073bb; margin: 0 0 0 3px; }
.subtabs { display: flex; margin: 27px 0 0 30px; height: 23px; color: #545b64; line-height: 23px; letter-spacing: -.25px; }
.subtabs b { font-weight: 700; padding: 0 17px; border-right: 1px solid #aab7b8; }
.subtabs b:first-child { width: 106px; }
.subtabs b:nth-child(2) { width: 116px; }
.subtabs b:last-child { border: 0; }
.subtabs .on { color: #e07941; }

/* console footer */
.foot { height: 23px; background: #232f3e; color: #fff; display: flex; align-items: center; padding-left: 16px; font-size: 10px; letter-spacing: -.5px; }
.foot b { font-weight: 600; }
.fb1 { width: 60px; letter-spacing: -.65px; }
.lang { width: 216.500px; color: #98a5aa; letter-spacing: -.34px; }
.uni { width: 71px; }
.foot svg { width: 12px; height: 12px; }
.copyr { width: 241px; margin-left: 269.500px; }
.priv { width: 51px; }
.terms { width: 45px; }
.cookie { letter-spacing: -.62px; }

/* downloads */
.dl { height: 45px; background: #14529a; border-top: 1px solid #486888; color: #fff; display: flex; align-items: center; font: 10.500px "Open Sans", sans-serif; }
.file { width: 10px; height: 12px; margin-left: 17px; }
.dl span { width: 125px; margin-left: 12px; letter-spacing: -.35px; }
.up { width: 8px; height: 6px; }
.dl i { width: 1px; height: 34px; background: #4479b1; margin-left: 14px; }
.showall { width: 62px; height: 25px; margin-left: 803px; border: 1px solid #8ab4e8; border-radius: 3px; color: #a5c9f7; text-align: center; line-height: 23px; font-size: 10px; font-weight: 600; letter-spacing: -.5px; }
.dx { width: 11px; height: 11px; margin-left: 8.500px; }

/* taskbar */
.task { height: 32px; display: flex; align-items: center; color: #fff; background: linear-gradient(90deg, #1e333b, #203740 60%, #1a2a3c 75%, #192347); font-family: "Open Sans", sans-serif; }
.start { width: 38px; padding-left: 12px; }
.start svg { width: 14px; height: 14px; }
.tsearch { width: 272px; height: 32px; background: #f2f2f2; color: #333; display: flex; align-items: center; padding-left: 9px; font-size: 11.800px; border-bottom: 1px solid #aaa; }
.mag { width: 14px; height: 14px; }
.tsearch span { width: 179px; margin-left: 9px; letter-spacing: -.38px; }
.palace { width: 61px; height: 30px; margin-top: 1px; }
.app { width: 38.700px; height: 32px; padding: 7px 0 0 10px; }
.app svg { width: 18px; height: 18px; }
.ff { margin-left: 2.500px; }
.run { box-shadow: inset 0 -2px #72b5df; clip-path: inset(0 3px 0 4px); }
.cur { background: #50686e; box-shadow: inset 0 -2px #80c0e8; }
.orange { background: #b16b33; box-shadow: inset 0 -2px #f0762b; }
.skype { font: 700 12px "Open Sans", sans-serif; fill: #fff; }
.spin { width: 14px; height: 32px; margin-left: 85.500px; background: #f0f0f0; display: flex; flex-direction: column; align-items: center; justify-content: space-between; padding: 5px 0 4px; }
.spin svg { width: 8px; height: 5px; }
.weather { width: 81px; display: flex; align-items: center; padding-left: 19px; font-size: 12px; }
.weather svg { width: 18px; height: 18px; margin-right: 5.500px; }
.weather span { letter-spacing: -.7px; }
.tr { width: 14px; height: 14px; margin-right: 11.300px; }
.snd { margin-right: 7px; }
.clock { width: 48px; text-align: center; font-size: 10px; line-height: 14px; letter-spacing: -.35px; }
.note { width: 14px; height: 14px; margin-left: 10px; }
.desk { width: 1px; height: 32px; background: #566078; margin-left: 14px; }
```
